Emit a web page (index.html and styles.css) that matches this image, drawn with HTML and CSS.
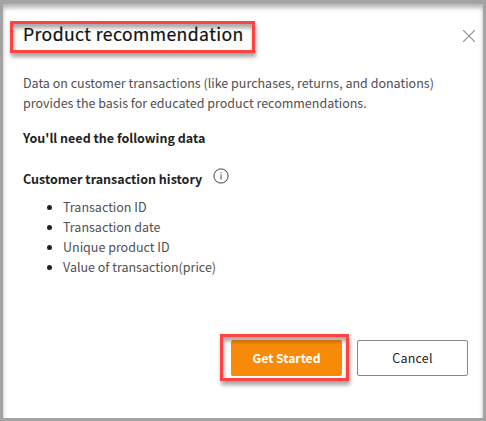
FILE: index.html
```html
<!DOCTYPE html>
<html lang="en">
<head>
<meta charset="utf-8">
<title>Product recommendation</title>
<link rel="stylesheet" href="styles.css">
</head>
<body>
<main class="dialog">
  <header class="header">
    <h1 class="title marked">Product recommendation</h1>
    <button class="close" aria-label="Close">
      <svg width="12" height="12" viewBox="0 0 12 12"><path d="M0 0L12 12M12 0L0 12"/></svg>
    </button>
  </header>
  <p class="intro">Data on customer transactions (like purchases, returns, and donations)<br>provides the basis for educated product recommendations.</p>
  <h2 class="subtitle need">You'll need the following data</h2>
  <div class="history">
    <h2 class="subtitle">Customer transaction history</h2>
    <svg class="info" width="16" height="16" viewBox="0 0 16 16"><circle cx="8" cy="8" r="7.1"/><path d="M8 6.6V11.5M8 4.3V5.4"/></svg>
  </div>
  <ul class="list">
    <li>Transaction ID</li>
    <li>Transaction date</li>
    <li>Unique product ID</li>
    <li>Value of transaction(price)</li>
  </ul>
  <footer class="actions">
    <div class="start-mark marked"><button class="button primary">Get Started</button></div>
    <button class="button">Cancel</button>
  </footer>
</main>
</body>
</html>
```
FILE: styles.css
```css
* { box-sizing: border-box; }
body { margin: 0; }
.dialog {
  width: 486px;
  height: 421px;
  border: 3px solid #a3a3a3;
  border-top-width: 4px;
  background: #fff;
  box-shadow: inset 0 4px 4px 0 #b8b8b8;
  font-family: "Noto Sans CJK SC", sans-serif;
  font-size: 12.5px;
  line-height: 20px;
  color: #505050;
  overflow: hidden;
}
.header { display: flex; justify-content: space-between; margin: 17px 8px 0 7px; }
.marked {
  border: 3px solid #ff4343;
  box-shadow: 1px 4px 4px rgba(0, 0, 0, .35), inset 1px 4px 4px rgba(0, 0, 0, .35);
}
.title {
  width: 245px;
  height: 32px;
  margin: 0;
  padding-left: 10px;
  font-size: 17.6px;
  font-weight: 400;
  letter-spacing: .42px;
  line-height: 19px;
  color: #111;
  -webkit-text-stroke: .2px #111;
  white-space: nowrap;
}
.close { margin: 9px 0 0; padding: 0; width: 12px; height: 12px; border: 0; background: none; line-height: 0; }
.close path { stroke: #8a8a8a; stroke-width: 1.1; fill: none; }
.intro { margin: 20px 0 0 20px; white-space: nowrap; }
.subtitle { margin: 0; font-size: 12.5px; line-height: 20px; font-weight: 700; color: #222; white-space: nowrap; }
.need { margin: 15px 0 0 20px; }
.history { display: flex; margin: 21px 0 0 20px; }
.history .subtitle { width: 190px; }
.info { margin-top: -1px; fill: none; stroke: #444; stroke-width: 1; }
.list { margin: 8px 0 0; padding: 0 0 0 44px; list-style: none; }
.list li { display: flex; align-items: center; gap: 11px; }
.list li::before { content: ""; width: 5px; height: 5px; margin-top: 1px; border-radius: 50%; background: #222; }
.actions { display: flex; align-items: center; margin: 57px 0 0 217px; }
.start-mark { width: 129px; height: 47px; padding: 2px 0 0 8px; margin-right: 8px; }
.button {
  width: 111px;
  height: 36px;
  padding: 0;
  border: 1px solid #888;
  border-radius: 2px;
  background: #fff;
  font: 400 12.5px/20px "Noto Sans CJK SC", sans-serif;
  letter-spacing: .2px;
  color: #222;
}
.primary {
  display: block;
  margin-top: 1px;
  border: 0;
  background: linear-gradient(#c87008, #f78b08 5px);
  color: #fff;
  font-size: 12.2px;
  font-weight: 700;
  letter-spacing: 0;
}
```
